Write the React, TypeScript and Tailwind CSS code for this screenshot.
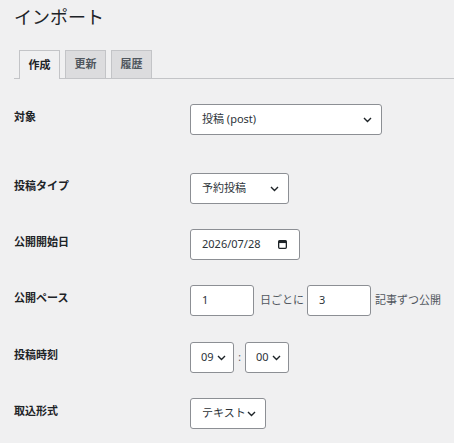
import React from "react";

const font = { fontFamily: '"Noto Sans", "Noto Sans CJK JP", sans-serif' };

const Chevron: React.FC = () => (
  <svg width="9" height="6" viewBox="0 0 9 6" fill="none" className="shrink-0">
    <path d="M1 1l3.5 3.5L8 1" stroke="#1d2327" strokeWidth="1.4" />
  </svg>
);

const CalendarIcon: React.FC = () => (
  <svg width="9" height="9" viewBox="0 0 9 9" fill="none" className="shrink-0">
    <rect x="0.65" y="0.65" width="7.7" height="7.7" rx="1" stroke="#1d2327" strokeWidth="1.3" />
    <rect x="0.65" y="0.65" width="7.7" height="2.4" fill="#1d2327" />
  </svg>
);

// select-like box with a chevron on the right
const SelectBox: React.FC<{ value: string; width: string; pad?: string }> = ({ value, width, pad }) => (
  <div
    className={`${width} ${pad ?? "pl-[11px] pr-[9px]"} h-[31px] shrink-0 flex items-center justify-between bg-white border border-[#8c8f94] rounded-[3px] text-[11px] text-[#2c3338] whitespace-nowrap`}
  >
    <span>{value}</span>
    <Chevron />
  </div>
);

const TextBox: React.FC<{ value: string }> = ({ value }) => (
  <div className="w-[64px] h-[31px] shrink-0 flex items-center pl-[11px] bg-white border border-[#8c8f94] rounded-[3px] text-[11px] text-[#2c3338]">
    {value}
  </div>
);

const Row: React.FC<{ label: string; className?: string; children: React.ReactNode }> = ({ label, className, children }) => (
  <div className={`flex items-start ${className ?? ""}`}>
    <div className="w-[176px] shrink-0 pt-[4px] text-[11px] leading-[18px] font-bold text-[#1d2327]">{label}</div>
    <div className="flex items-center whitespace-nowrap">{children}</div>
  </div>
);

const Tab: React.FC<{ label: string; active?: boolean }> = ({ label, active }) =>
  active ? (
    <div className="w-[41px] h-[29px] -mb-px flex items-center justify-center border border-b-0 border-[#c3c4c7] bg-[#f0f0f1] text-[11px] font-bold text-[#1d2327]">
      {label}
    </div>
  ) : (
    <div className="w-[41px] h-[28px] flex items-center justify-center border border-b-0 border-[#c3c4c7] bg-[#dcdcde] text-[11px] font-semibold text-[#50575e]">
      {label}
    </div>
  );

export default function App() {
  return (
    <div className="w-[454px] h-[443px] overflow-hidden bg-[#f0f0f1] pl-[14px]" style={font}>
      <h1 className="pt-[5px] text-[18px] leading-[25px] font-normal text-[#1d2327]">インポート</h1>

      {/* tabs */}
      <div className="mt-[20px] flex gap-[5px] pl-[5px] border-b border-[#c3c4c7] h-[29px] items-end">
        <Tab label="作成" active />
        <Tab label="更新" />
        <Tab label="履歴" />
      </div>

      {/* form */}
      <div className="mt-[25px] flex flex-col gap-[25px]">
        <Row label="対象" className="mb-[13px]">
          <SelectBox value="投稿 (post)" width="w-[192px]" />
        </Row>
        <Row label="投稿タイプ">
          <SelectBox value="予約投稿" width="w-[99px]" />
        </Row>
        <Row label="公開開始日">
          <div className="w-[110px] h-[31px] flex items-center justify-between pl-[11px] pr-[12px] bg-white border border-[#8c8f94] rounded-[3px] text-[11px] text-[#2c3338]">
            <span>2026/07/28</span>
            <CalendarIcon />
          </div>
        </Row>
        <Row label="公開ペース">
          <TextBox value="1" />
          <span className="ml-[6px] mr-[3px] text-[11px] text-[#50575e]">日ごとに</span>
          <TextBox value="3" />
          <span className="ml-[4px] text-[11px] text-[#50575e]">記事ずつ公開</span>
        </Row>
        <Row label="投稿時刻" className="mt-px">
          <SelectBox value="09" width="w-[44px]" pad="pl-[10px] pr-[7px]" />
          <span className="w-[11px] text-center text-[10px] text-[#50575e]">:</span>
          <SelectBox value="00" width="w-[44px]" pad="pl-[10px] pr-[7px]" />
        </Row>
        <Row label="取込形式">
          <SelectBox value="テキスト" width="w-[76px]" />
        </Row>
      </div>
    </div>
  );
}
